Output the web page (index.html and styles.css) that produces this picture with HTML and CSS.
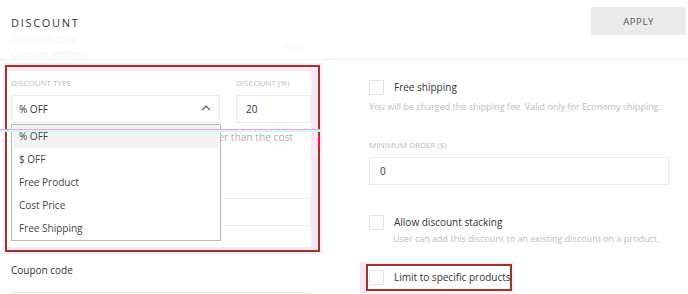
FILE: index.html
```html
<!DOCTYPE html>
<html lang="en">
<head>
<meta charset="utf-8">
<title>Discount</title>
<link rel="stylesheet" href="styles.css">
</head>
<body>
<header class="top">
  <div class="title-block">
    <h1 class="title">DISCOUNT</h1>
    <div class="ghost ghost-a">Discount code</div>
    <div class="ghost ghost-b">Coupon settings</div>
  </div>
  <div class="ghost ghost-c">MAKE</div>
  <button class="apply" type="button">APPLY</button>
</header>

<main class="cols">
  <section class="left">
    <div class="annot">
      <div class="annot-inner">
        <div class="form">
          <div class="row">
            <div class="field field-type">
              <div class="label">DISCOUNT TYPE</div>
              <div class="input select">
                <span>% OFF</span>
                <svg class="chev" width="10" height="6" viewBox="0 0 10 6"><path d="M1 5.2 L5 1.2 L9 5.2" fill="none" stroke="#555" stroke-width="1.2"/></svg>
              </div>
            </div>
            <div class="field field-amount">
              <div class="label">DISCOUNT (%)</div>
              <div class="input"><span>20</span></div>
            </div>
          </div>
          <div class="hint"><span class="hint-text">Discount price can not be lower than the cost</span></div>
          <div class="input wide"></div>

          <ul class="menu">
            <li class="menu-item active">% OFF</li>
            <li class="menu-item">$ OFF</li>
            <li class="menu-item">Free Product</li>
            <li class="menu-item">Cost Price</li>
            <li class="menu-item">Free Shipping</li>
          </ul>
        </div>
      </div>
      <div class="guide"></div>
      <div class="guide-red"></div>
    </div>
    <div class="coupon">Coupon code</div>
    <div class="rule"></div>
  </section>

  <section class="right">
    <div class="check-row">
      <span class="box"></span>
      <span class="check-label">Free shipping</span>
    </div>
    <p class="help">You will be charged the shipping fee. Valid only for Economy shipping.</p>

    <div class="label label-min">MINIMUM ORDER ($)</div>
    <div class="input min"><span>0</span></div>

    <div class="check-row stack">
      <span class="box"></span>
      <span class="check-label">Allow discount stacking</span>
    </div>
    <p class="help help-indent">User can add this discount to an existing discount on a product.</p>

    <div class="limit">
      <div class="limit-inner">
        <span class="box"></span>
        <span class="check-label">Limit to specific products</span>
      </div>
    </div>
  </section>
</main>
</body>
</html>
```

FILE: styles.css
```css
* { box-sizing: border-box; }

html, body {
  margin: 0;
  padding: 0;
  background: #ffffff;
  width: 688px;
  height: 294px;
  overflow: hidden;
  font-family: "Open Sans", "Noto Sans", sans-serif;
  color: #444;
}

.top {
  position: relative;
  height: 60px;
  border-bottom: 1px solid #efefef;
  display: flex;
  justify-content: space-between;
  align-items: flex-start;
}

.title-block {
  padding: 15px 0 0 11px;
}

.title {
  margin: 0;
  font-size: 11px;
  font-weight: 400;
  letter-spacing: 1.7px;
  line-height: 16px;
  color: #333;
}

.ghost {
  font-size: 10px;
  line-height: 15px;
  white-space: nowrap;
}
.ghost-a { color: #eef9fd; margin-top: 1px; }
.ghost-b { color: #f4f2fc; }
.ghost-c {
  position: absolute;
  left: 282px;
  top: 38px;
  font-size: 8px;
  color: #f1f6fa;
}

.apply {
  margin: 7px 2px 0 0;
  width: 95px;
  height: 28px;
  border: none;
  background: #ebebeb;
  font-family: "Open Sans", sans-serif;
  font-size: 9.5px;
  letter-spacing: 0.6px;
  color: #555;
  padding: 0;
}

.cols {
  display: flex;
}

.left {
  width: 322px;
  flex: none;
  padding-top: 3px;
}

.annot {
  position: relative;
  margin-left: 3px;
  width: 319px;
  height: 191px;
  padding: 2px;
  background: #fde6f6;
}

.annot-inner {
  height: 100%;
  border: 2px solid #8e3b2c;
  background: #fde6f6;
  padding: 4px 7px 3px 0;
}

.form {
  position: relative;
  background: #fff;
  height: 100%;
  padding: 6px 0 0 4px;
}

.row {
  display: flex;
  gap: 16px;
}

.field-type { width: 209px; }
.field-amount { width: 75px; }

.label {
  font-size: 8px;
  line-height: 12px;
  color: #bababa;
  white-space: nowrap;
}

.input {
  height: 28px;
  border: 1px solid #ececec;
  display: flex;
  align-items: center;
  padding: 0 9px;
  font-size: 10px;
  color: #333;
  background: #fff;
}

.field .input { margin-top: 6px; }

.select {
  justify-content: space-between;
  padding: 0 7px 0 7px;
}
.chev { margin-right: 1px; margin-top: -2px; }

.hint {
  margin: 7px 0 0 0;
  width: 282px;
  display: flex;
  justify-content: flex-end;
  overflow: hidden;
  font-size: 10.2px;
  line-height: 14px;
  color: #b0b0b0;
  white-space: nowrap;
}
.hint-text { flex: none; }

.wide {
  margin-top: 54px;
  width: 300px;
}

.menu {
  position: absolute;
  left: 4px;
  top: 53px;
  width: 210px;
  margin: 0;
  padding: 0 1px;
  list-style: none;
  border: 1px solid #b9b9b9;
  background: #fff;
}

.menu-item {
  height: 23px;
  line-height: 23px;
  padding-left: 6px;
  font-size: 10px;
  color: #444;
}
.menu-item.active { background: #f3f3f3; }

.guide {
  position: absolute;
  left: -3px;
  top: 66px;
  width: 320px;
  height: 3px;
  border-top: 1px solid #f6a4df;
  background: #cdfbf4;
}

.guide-red {
  position: absolute;
  left: 315px;
  top: 73px;
  width: 2px;
  height: 11px;
  background: #f0182a;
}

.coupon {
  margin: 9px 0 0 11px;
  font-size: 10px;
  line-height: 14px;
  color: #333;
}

.rule {
  margin: 15px 0 0 11px;
  width: 300px;
  height: 1px;
  background: #e6e6e6;
}

.right {
  padding-left: 47px;
  width: 347px;
  flex: none;
}

.check-row {
  display: flex;
  align-items: center;
  gap: 10px;
  margin-top: 20px;
}

.box {
  width: 15px;
  height: 15px;
  border: 1px solid #e3e3e3;
  background: #fff;
  flex: none;
}

.check-label {
  font-size: 10px;
  color: #333;
  line-height: 15px;
  white-space: nowrap;
}

.help {
  margin: 5px 0 0 0;
  font-size: 9px;
  line-height: 13px;
  color: #bdbdbd;
  white-space: nowrap;
}
.help-indent { margin-left: 24px; margin-top: 2px; }

.label-min { margin-top: 26px; }

.min {
  margin-top: 6px;
  width: 300px;
  padding-left: 10px;
}

.stack { margin-top: 30px; }

.limit {
  margin: 17px 0 0 -9px;
  width: 154px;
  height: 31px;
  background: #fde6f6;
  padding: 2px 2px 2px 6px;
}

.limit-inner {
  height: 100%;
  border: 2px solid #8e3b2c;
  background: #fff;
  display: flex;
  align-items: center;
  gap: 10px;
  padding-left: 1px;
}
```
